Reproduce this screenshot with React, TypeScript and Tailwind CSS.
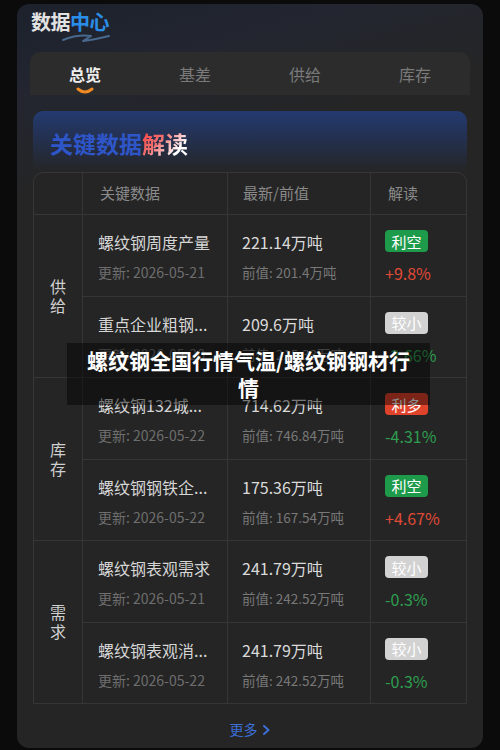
import React from "react";

type Row = {
  title: string;
  date: string;
  value: string;
  prev: string;
  badge: "利空" | "利多" | "较小";
  pct: string;
};

const groups: { label: string; rows: Row[] }[] = [
  {
    label: "供给",
    rows: [
      { title: "螺纹钢周度产量", date: "更新: 2026-05-21", value: "221.14万吨", prev: "前值: 201.4万吨", badge: "利空", pct: "+9.8%" },
      { title: "重点企业粗钢...", date: "更新: 2026-05-20", value: "209.6万吨", prev: "前值: 215.33万吨", badge: "较小", pct: "-2.66%" },
    ],
  },
  {
    label: "库存",
    rows: [
      { title: "螺纹钢132城...", date: "更新: 2026-05-22", value: "714.62万吨", prev: "前值: 746.84万吨", badge: "利多", pct: "-4.31%" },
      { title: "螺纹钢钢铁企...", date: "更新: 2026-05-22", value: "175.36万吨", prev: "前值: 167.54万吨", badge: "利空", pct: "+4.67%" },
    ],
  },
  {
    label: "需求",
    rows: [
      { title: "螺纹钢表观需求", date: "更新: 2026-05-21", value: "241.79万吨", prev: "前值: 242.52万吨", badge: "较小", pct: "-0.3%" },
      { title: "螺纹钢表观消...", date: "更新: 2026-05-22", value: "241.79万吨", prev: "前值: 242.52万吨", badge: "较小", pct: "-0.3%" },
    ],
  },
];

function Badge({ kind }: { kind: Row["badge"] }) {
  const cls =
    kind === "利空"
      ? "bg-[#1e9a4b]"
      : kind === "利多"
      ? "bg-[#e0432b]"
      : "bg-[#d2d2d2]";
  return (
    <span className={`inline-flex h-[22px] w-[43px] items-center justify-center rounded-[4px] text-[15px] leading-none text-white ${cls}`}>
      {kind}
    </span>
  );
}

export default function App() {
  const cell = "bg-[#252525]";
  return (
    <div
      className="relative min-h-[750px] w-[500px] bg-[#0b0b0b] px-[17px] pt-[4px]"
      style={{ fontFamily: '"Noto Sans CJK SC", "Noto Sans", sans-serif' }}
    >
      <div className="h-[744px] overflow-hidden rounded-[12px] bg-[#252525] bg-[linear-gradient(165deg,#1c212c_0%,#232630_90px,#252525_190px)]">
        {/* header */}
        <div className="flex h-[48px] items-start pl-[14px] pt-[4px]">
          <div className="relative text-[20px] font-bold leading-[28px] tracking-[-0.5px]">
            <span className="text-[#e2e2e2]">数据</span>
            <span className="text-[#2a8ee8]">中心</span>
            <svg className="absolute left-[30px] top-[24px]" width="50" height="12" viewBox="0 0 50 12" fill="none">
              <path d="M2 8 C 12 4, 22 3, 30 4 L 22 9 C 32 8, 40 6, 48 4" stroke="#5a86b8" strokeOpacity="0.7" strokeWidth="2" strokeLinecap="round" strokeLinejoin="round" />
            </svg>
          </div>
        </div>

        {/* tabs */}
        <div className="mx-[13px] grid h-[43px] grid-cols-4 rounded-t-[10px] bg-[#2c2c2c]">
          {["总览", "基差", "供给", "库存"].map((t, i) => (
            <div key={t} className="relative flex items-center justify-center">
              <span className={i === 0 ? "text-[16px] font-bold text-[#eeeeee]" : "text-[16px] text-[#7a7a7a]"}>{t}</span>
              {i === 0 && (
                <svg className="absolute bottom-[0px] left-1/2 -translate-x-1/2" width="18" height="8" viewBox="0 0 18 8" fill="none">
                  <path d="M2 2 Q9 8 16 2" stroke="#f08a24" strokeWidth="3" strokeLinecap="round" />
                </svg>
              )}
            </div>
          ))}
        </div>

        {/* content */}
        <div className="px-[16px] pt-[16px]">
          <div className="h-[61px] rounded-t-[10px] bg-[linear-gradient(180deg,#243a70_0%,#23304f_45%,#252525_100%)] pl-[17px] pt-[16px]">
            <span className="text-[23px] font-bold leading-[32px] text-[#2f56c9]">关键数据</span>
            <span className="bg-[linear-gradient(135deg,#ff3b3b_0%,#f07070_40%,#ffffff_75%)] bg-clip-text text-[23px] font-bold leading-[32px] text-transparent">
              解读
            </span>
          </div>

          <div className="grid grid-cols-[48px_144px_142px_95px] grid-rows-[41px_repeat(6,80.5px)] gap-px overflow-hidden rounded-t-[10px] border border-[#363636] bg-[#363636]">
            <div className={cell}></div>
            <div className={`${cell} flex items-center pl-[17px] text-[15px] text-[#8a8a8a]`}>关键数据</div>
            <div className={`${cell} flex items-center pl-[15px] text-[15px] text-[#8a8a8a]`}>最新/前值</div>
            <div className={`${cell} flex items-center pl-[17px] text-[15px] text-[#8a8a8a]`}>解读</div>
            {groups.map((g) => (
              <React.Fragment key={g.label}>
                <div className={`${cell} row-span-2 flex flex-col items-center justify-center text-[16px] leading-[19px] text-[#cfcfcf]`}>
                  {g.label.split("").map((c) => (
                    <span key={c}>{c}</span>
                  ))}
                </div>
                {g.rows.map((r, idx) => (
                  <React.Fragment key={r.title + idx}>
                    <div className={`${cell} col-start-2 flex flex-col pl-[15px] pt-[16px]`}>
                      <span className="text-[16px] leading-[22px] text-[#d6d6d6]">{r.title}</span>
                      <span className="mt-[10px] text-[14px] leading-[18px] text-[#6e6e6e]">{r.date}</span>
                    </div>
                    <div className={`${cell} flex flex-col pl-[14px] pt-[16px]`}>
                      <span className="text-[16px] leading-[22px] text-[#dadada]">{r.value}</span>
                      <span className="mt-[10px] text-[13.5px] leading-[18px] text-[#787878]">{r.prev}</span>
                    </div>
                    <div className={`${cell} flex flex-col items-start pl-[14px] pt-[15px]`}>
                      <Badge kind={r.badge} />
                      <span className={`mt-[10px] text-[16px] leading-[22px] ${r.pct.startsWith("+") ? "text-[#e04a36]" : "text-[#2e9e50]"}`}>{r.pct}</span>
                    </div>
                  </React.Fragment>
                ))}
              </React.Fragment>
            ))}
          </div>

          <div className="flex items-center justify-center pt-[15px]">
            <span className="text-[14px] text-[#3b6fd6]">更多</span>
            <svg className="ml-[4px]" width="9" height="12" viewBox="0 0 9 12" fill="none">
              <path d="M2 2 L6.5 6 L2 10" stroke="#3b6fd6" strokeWidth="2" strokeLinecap="round" strokeLinejoin="round" />
            </svg>
          </div>
        </div>
      </div>

      {/* overlay caption */}
      <div className="absolute left-[67px] top-[343px] flex h-[62px] w-[363px] items-center justify-center bg-black/45 px-[10px]">
        <p className="text-center text-[21px] font-bold leading-[27px] text-white">螺纹钢全国行情气温/螺纹钢钢材行情</p>
      </div>
    </div>
  );
}
